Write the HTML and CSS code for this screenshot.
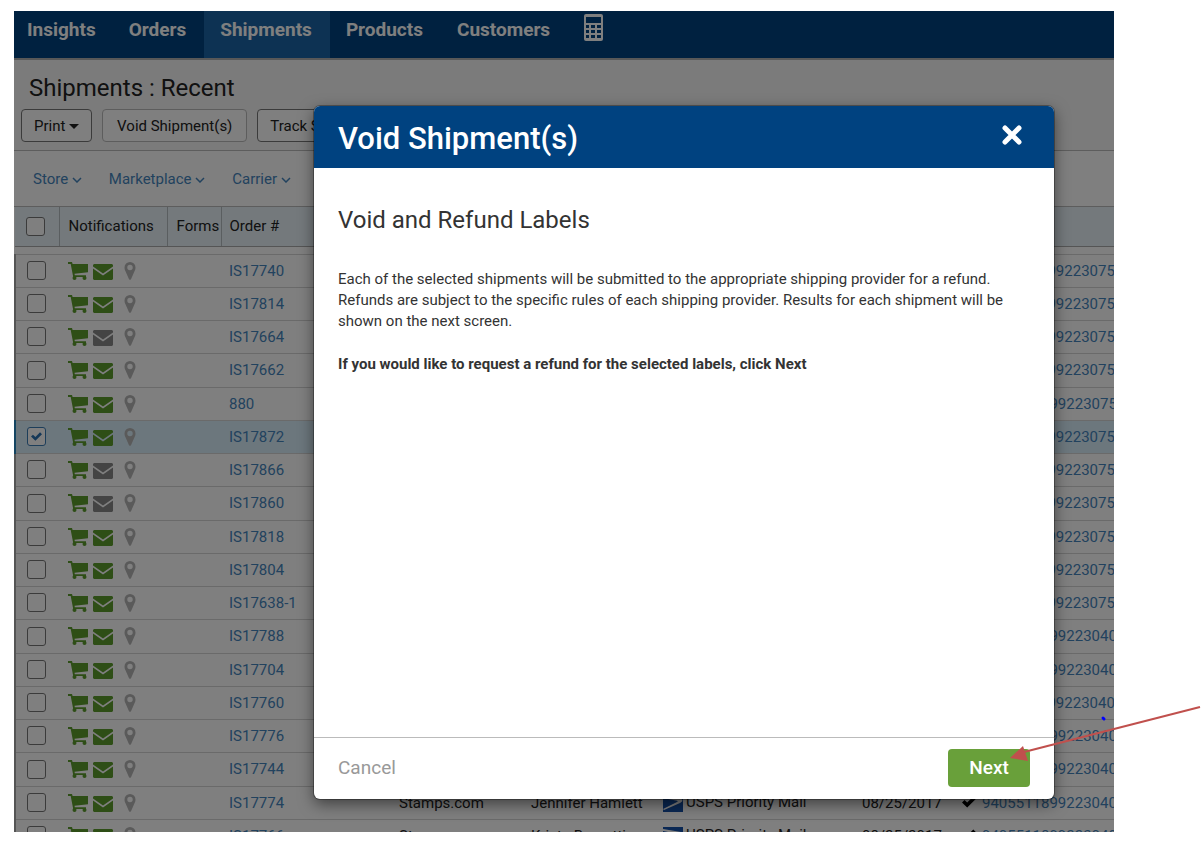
FILE: index.html
```html
<!DOCTYPE html>
<html lang="en">
<head>
  <meta charset="UTF-8">
  <meta name="viewport" content="width=device-width, initial-scale=1.0">
  <title>Shipments : Recent</title>
  <link rel="stylesheet" href="styles.css">
</head>
<body>
  <svg class="sprite" aria-hidden="true">
    <symbol id="cart" viewBox="0 0 20 18">
      <path d="M0 0h4l.6 2H20v8.200L6.500 11.800l.3 1.400H18V15H5.200L2.700 2H0z"/>
      <circle cx="6.500" cy="16" r="2"/>
      <circle cx="16.500" cy="16" r="2"/>
    </symbol>
    <symbol id="mail" viewBox="0 0 20 16">
      <path d="M1 0h18l1 1v1.500L10 9.500 0 2.500V1z"/>
      <path d="M0 4.500l10 7 10-7V15l-1 1H1l-1-1z"/>
    </symbol>
    <symbol id="pin" viewBox="0 0 12 18">
      <path fill-rule="evenodd" d="M6 0a5.500 5.500 0 0 1 5.500 5.500c0 2-.6 3-1.200 4.200L7 17.200q-1 1.200-2 0L1.700 9.700C1.100 8.500.5 7.500.5 5.500A5.500 5.500 0 0 1 6 0zm0 2.800a2.700 2.700 0 1 0 0 5.400 2.700 2.700 0 0 0 0-5.400z"/>
    </symbol>
    <symbol id="usps" viewBox="0 0 20 18">
      <path d="M0 0h20v18H0z"/>
      <path fill="#fff" d="M0 2l18 3q2 .5 1 2.500L17 9 1 16l-1-1 14-7q2-1-1-1.500L0 4z"/>
    </symbol>
    <symbol id="tick" viewBox="0 0 14 12">
      <path d="M0 6.500l2.500-2.500L5.200 6.600 11.300.5 13.800 3 5.200 11.600z"/>
    </symbol>
    <symbol id="chevron" viewBox="0 0 10 6">
      <path fill="none" stroke="currentColor" stroke-width="1.500" d="M1 1l4 4 4-4"/>
    </symbol>
  </svg>

  <div class="app">
    <nav class="navbar">
      <a href="#">Insights</a>
      <a href="#">Orders</a>
      <a href="#" class="active">Shipments</a>
      <a href="#">Products</a>
      <a href="#">Customers</a>
      <a href="#" class="calculator" aria-label="Calculator">
        <svg viewBox="0 0 19 27" width="19" height="27">
          <path fill="currentColor" fill-rule="evenodd" d="M2 0h15q2 0 2 2v23q0 2-2 2H2q-2 0-2-2V2Q0 0 2 0zm0 3v6h15V3zm0 8v3h3v-3zm5 0v3h4v-3zm6 0v3h4v-3zM2 16v3h3v-3zm5 0v3h4v-3zm6 0v3h4v-3zM2 21v3h3v-3zm5 0v3h4v-3zm6 0v3h4v-3z"/>
        </svg>
      </a>
    </nav>

    <header class="page-header">
      <h1>Shipments : Recent</h1>
      <div class="toolbar">
        <button type="button">Print <span class="caret"></span></button>
        <button type="button" class="light">Void Shipment(s)</button>
        <button type="button">Track Shipment</button>
      </div>
    </header>

    <div class="filters">
      <a href="#">Store <svg><use href="#chevron"/></svg></a>
      <a href="#">Marketplace <svg><use href="#chevron"/></svg></a>
      <a href="#">Carrier <svg><use href="#chevron"/></svg></a>
    </div>

    <table class="shipments">
      <thead>
        <tr>
          <th class="col-check"><input type="checkbox" aria-label="Select all"></th>
          <th class="col-notify">Notifications</th>
          <th class="col-forms">Forms</th>
          <th class="col-order">Order #</th>
          <th class="col-provider"></th>
          <th class="col-name"></th>
          <th class="col-service"></th>
          <th class="col-date"></th>
          <th class="col-tracking"></th>
        </tr>
      </thead>
      <tbody>
        <tr class="spacer"><td colspan="9"></td></tr>
      </tbody>
      <tbody id="rows"></tbody>
    </table>

    <div class="backdrop">
      <div class="modal" role="dialog" aria-labelledby="modal-title">
        <div class="modal-header">
          <h2 id="modal-title">Void Shipment(s)</h2>
          <button type="button" class="close" aria-label="Close">
            <svg viewBox="0 0 20 20" width="20" height="20">
              <path stroke="currentColor" stroke-width="5" stroke-linecap="round" d="M3 3l14 14M17 3L3 17"/>
            </svg>
          </button>
        </div>
        <div class="modal-body">
          <h3>Void and Refund Labels</h3>
          <p>Each of the selected shipments will be submitted to the appropriate shipping provider for a refund. Refunds are subject to the specific rules of each shipping provider. Results for each shipment will be shown on the next screen.</p>
          <p><strong>If you would like to request a refund for the selected labels, click Next</strong></p>
        </div>
        <div class="modal-footer">
          <button type="button" class="cancel">Cancel</button>
          <button type="button" class="next">Next</button>
        </div>
      </div>
    </div>
  </div>

  <svg class="pointer" viewBox="0 0 193 62" aria-hidden="true">
    <path stroke="#c0504d" stroke-width="2" d="M14 50L190 5"/>
    <path fill="#c0504d" d="M0 56l13-12 5 15z"/>
    <path stroke="#00f" stroke-width="3" stroke-linecap="round" d="M93 16l1 1"/>
  </svg>

  <script>
    const shipments = [
      { order: 'IS17740', tracking: '9400111899223075', compact: true },
      { order: 'IS17814', tracking: '9400111899223075', compact: true },
      { order: 'IS17664', tracking: '9400111899223075', compact: true, unsent: true },
      { order: 'IS17662', tracking: '9400111899223075', compact: true },
      { order: '880', tracking: '9405511899223075' },
      { order: 'IS17872', tracking: '9400111899223075', compact: true, selected: true },
      { order: 'IS17866', tracking: '9400111899223075', compact: true, unsent: true },
      { order: 'IS17860', tracking: '9400111899223075', compact: true, unsent: true },
      { order: 'IS17818', tracking: '9400111899223075', compact: true },
      { order: 'IS17804', tracking: '9400111899223075', compact: true },
      { order: 'IS17638-1', tracking: '9400111899223075', compact: true },
      { order: 'IS17788', tracking: '9405511899223040' },
      { order: 'IS17704', tracking: '9405511899223040' },
      { order: 'IS17760', tracking: '9400111899223040', compact: true },
      { order: 'IS17776', tracking: '9405511899223040' },
      { order: 'IS17744', tracking: '9405511899223040' },
      { order: 'IS17774', tracking: '9405511899223040', name: 'Jennifer Hamlett' },
      { order: 'IS17766', tracking: '9405511899223040', name: 'Krista Barnetti' }
    ];

    const rows = document.querySelector('#rows');

    shipments.forEach((item) => {
      const row = document.createElement('tr');
      if (item.selected) {
        row.classList.add('selected');
      }
      row.innerHTML = `
        <td class="col-check"><input type="checkbox" aria-label="Select ${item.order}" ${item.selected ? 'checked' : ''}></td>
        <td class="col-notify">
          <div class="icons">
            <svg class="icon-cart"><use href="#cart"/></svg>
            <svg class="icon-mail ${item.unsent ? 'off' : ''}"><use href="#mail"/></svg>
            <svg class="icon-pin"><use href="#pin"/></svg>
          </div>
        </td>
        <td></td>
        <td class="col-order"><a href="#">${item.order}</a></td>
        <td>${item.name ? 'Stamps.com' : ''}</td>
        <td>${item.name || ''}</td>
        <td>${item.name ? '<svg class="icon-usps"><use href="#usps"/></svg>USPS Priority Mail' : ''}</td>
        <td>${item.name ? '08/25/2017' : ''}</td>
        <td><svg class="icon-tick ${item.compact ? 'compact' : ''}"><use href="#tick"/></svg><a href="#">${item.tracking}</a></td>
      `;
      rows.appendChild(row);
    });
  </script>
</body>
</html>
```
FILE: styles.css
```css
* {
  box-sizing: border-box;
}
body {
  background-color: white;
  color: #222;
  display: flex;
  font-family: Roboto, Arial, sans-serif;
  font-size: 15px;
  height: 100vh;
  margin: 0;
  overflow: hidden;
  padding: 11px 89px 10px 14px;
  position: relative;
}
a {
  color: #4585bd;
  text-decoration: none;
}
button {
  cursor: pointer;
  font-family: inherit;
}
.sprite {
  height: 0;
  position: absolute;
  width: 0;
}
.app {
  flex: 1;
  min-width: 0;
  overflow: hidden;
  position: relative;
}
.navbar {
  background-color: #004280;
  border-bottom: 2px solid #b0b0b0;
  display: flex;
  height: 49px;
  padding-left: 1px;
}
.navbar a {
  color: white;
  font-size: 19px;
  font-weight: 700;
  line-height: 37px;
  padding: 0 17px 0 12px;
}
.navbar a + a {
  padding: 0 18px 0 16px;
}
.navbar .active {
  background-color: #1b65a6;
}
.navbar a.calculator {
  line-height: 0;
  padding-top: 3px;
}
.page-header {
  background-color: #f7f7f7;
  border-bottom: 1px solid #bbb;
  height: 91px;
  padding: 14px 7px 0;
}
.page-header h1 {
  font-size: 24px;
  font-weight: 400;
  line-height: 28px;
  margin: 0 8px 7px;
}
.toolbar {
  display: flex;
  gap: 10px;
}
.toolbar button {
  background-color: white;
  border: 1px solid #777;
  border-radius: 4px;
  color: #222;
  font-size: 15px;
  height: 33px;
  padding: 0 12px;
}
.toolbar .light {
  border-color: #bbb;
  padding: 0 14px;
}
.caret {
  border: 5px solid transparent;
  border-bottom-width: 0;
  border-top-color: #222;
  display: inline-block;
  vertical-align: middle;
}
.filters {
  align-items: center;
  background-color: white;
  border-bottom: 1px solid #bbb;
  display: flex;
  gap: 27px;
  height: 56px;
  padding-left: 19px;
}
.filters svg {
  height: 6px;
  vertical-align: middle;
  width: 10px;
}
.shipments {
  background-color: white;
  border-collapse: collapse;
  table-layout: fixed;
  white-space: nowrap;
  width: 100%;
}
.shipments th {
  background-color: #e8f3f9;
  border-bottom: 1px solid #aaa;
  font-weight: 400;
  height: 39px;
  padding: 0;
  text-align: left;
}
.shipments td {
  border-bottom: 1px solid #d5d5d5;
  height: 33px;
  padding: 0;
}
.shipments tr:nth-child(4n) td {
  height: 34px;
}
.shipments .spacer td {
  height: 8px;
}
.shipments .selected td {
  background-color: #d9effb;
}
#rows {
  border-left: 2px solid #aaa;
}
#rows .selected {
  border-left: 2px solid #2a8ac4;
}
.shipments .col-check {
  padding-left: 11px;
  width: 44px;
}
.shipments .col-notify {
  padding-left: 9px;
  width: 108px;
}
.shipments .col-forms {
  padding-left: 9px;
  width: 54px;
}
.shipments .col-order {
  padding-left: 8px;
  width: 178px;
}
.shipments th.col-notify,
.shipments th.col-forms,
.shipments th.col-order {
  border-left: 1px solid #b5bcc0;
}
.shipments .col-provider {
  width: 132px;
}
.shipments .col-name {
  width: 132px;
}
.shipments .col-service {
  width: 199px;
}
.shipments .col-date {
  width: 100px;
}
.shipments input {
  appearance: none;
  background-color: white;
  border: 1px solid #777;
  border-radius: 3px;
  display: grid;
  height: 19px;
  margin: 0;
  place-items: center;
  width: 19px;
}
.shipments input:checked {
  border-color: #3a7cb5;
}
.shipments input:checked::after {
  background-color: #2a70b0;
  clip-path: polygon(0 50%, 18% 32%, 40% 54%, 82% 8%, 100% 28%, 40% 92%);
  content: "";
  height: 10px;
  width: 11px;
}
.icons {
  align-items: flex-end;
  display: flex;
  gap: 5px;
}
.icon-cart {
  fill: #5c9c2c;
  height: 18px;
  width: 20px;
}
.icon-mail {
  fill: #5c9c2c;
  height: 16px;
  width: 20px;
}
.icon-mail.off {
  fill: #888;
}
.icon-pin {
  fill: #b5b5b5;
  height: 18px;
  margin-left: 6px;
  width: 12px;
}
.icon-usps {
  fill: #1550a8;
  height: 18px;
  margin-right: 3px;
  vertical-align: middle;
  width: 20px;
}
.icon-tick {
  height: 12px;
  margin-right: 6px;
  width: 14px;
}
.icon-tick.compact {
  margin-right: 4px;
}
.backdrop {
  background-color: rgba(0, 0, 0, 0.5);
  display: flex;
  inset: 0;
  padding: 95px 60px 33px 300px;
  position: absolute;
}
.modal {
  background-color: white;
  border-radius: 6px;
  box-shadow: 0 5px 15px rgba(0, 0, 0, 0.5), 0 0 0 1px rgba(0, 0, 0, 0.3);
  display: flex;
  flex: 1;
  flex-direction: column;
  overflow: hidden;
}
.modal-header {
  align-items: center;
  background-color: #004280;
  color: white;
  display: flex;
  height: 62px;
  justify-content: space-between;
  padding: 2px 32px 0 24px;
}
.modal-header h2 {
  font-size: 31px;
  font-weight: 500;
  margin: 0;
}
.close {
  background: none;
  border: none;
  color: white;
  line-height: 0;
  padding: 0 0 6px;
}
.modal-body {
  color: #333;
  flex: 1;
  padding: 38px 24px 0;
}
.modal-body h3 {
  font-size: 24px;
  font-weight: 400;
  line-height: 28px;
  margin: 0 0 35px;
}
.modal-body p {
  line-height: 21px;
  margin: 0 0 22px;
}
.modal-body strong {
  font-weight: 700;
}
.modal-footer {
  align-items: center;
  border-top: 1px solid #bbb;
  display: flex;
  height: 62px;
  justify-content: space-between;
  padding: 0 24px 2px;
}
.cancel {
  background: none;
  border: none;
  color: #999;
  font-size: 19px;
  padding: 0;
}
.next {
  background-color: #69a03a;
  border: none;
  border-radius: 4px;
  color: white;
  font-size: 19px;
  font-weight: 500;
  height: 38px;
  width: 82px;
}
.pointer {
  height: 62px;
  position: absolute;
  right: 0;
  top: 702px;
  width: 193px;
}
```
